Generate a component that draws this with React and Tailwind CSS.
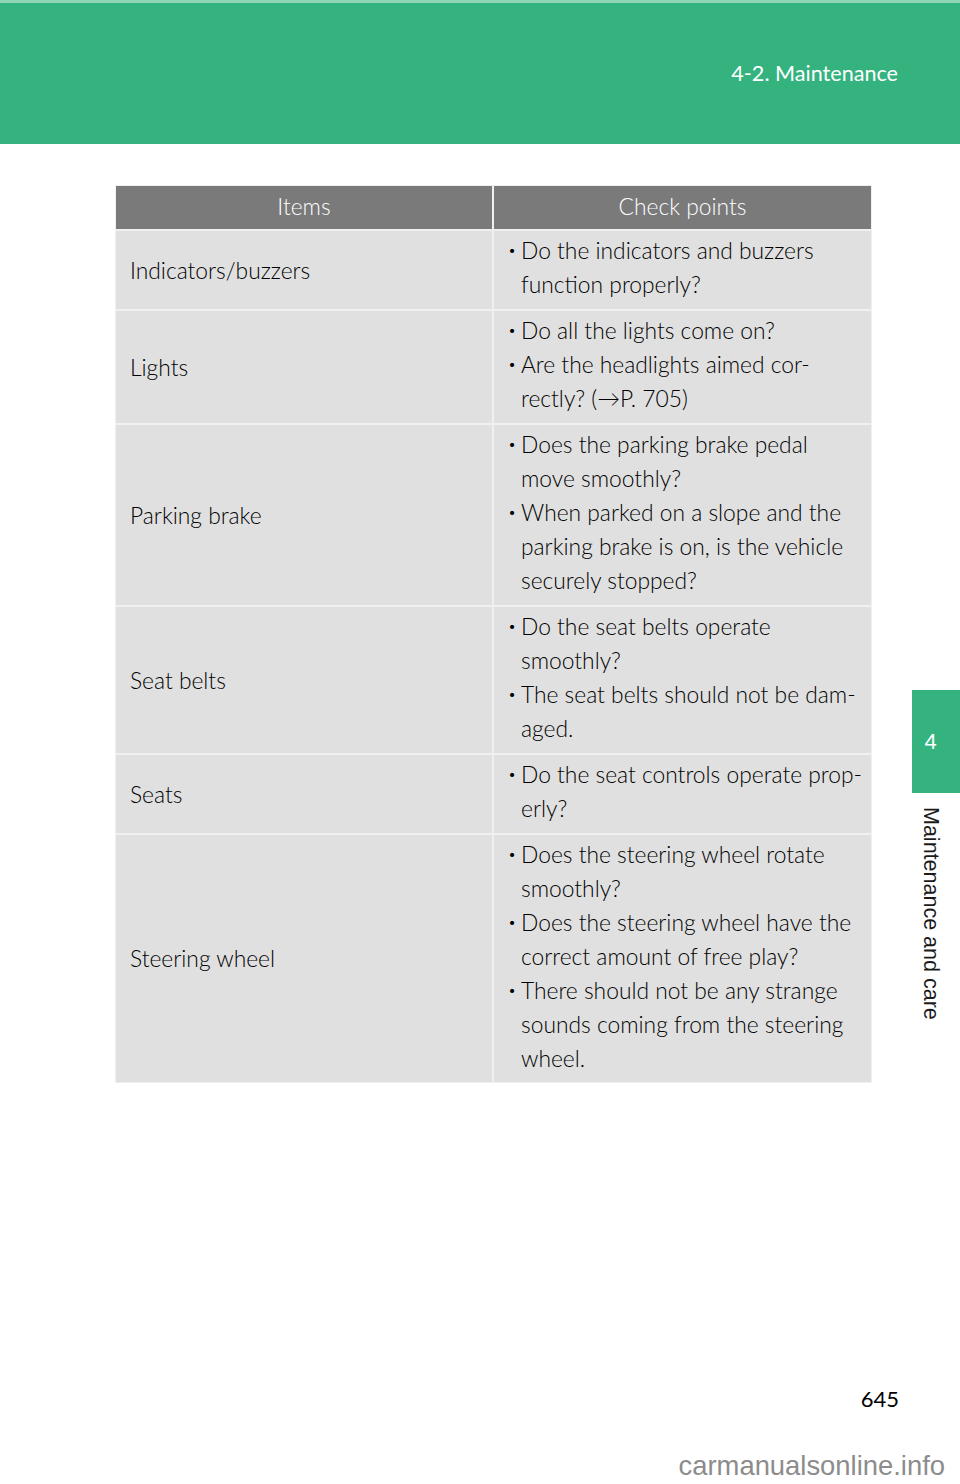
import React from "react";

const rows = [
  { item: "Indicators/buzzers", h: "h-[78px]", points: [["Do the indicators and buzzers", "function properly?"]] },
  { item: "Lights", h: "h-[112px]", points: [["Do all the lights come on?"], ["Are the headlights aimed cor-", "rectly? (\u2192P. 705)"]] },
  {
    item: "Parking brake",
    h: "h-[180px]",
    points: [
      ["Does the parking brake pedal", "move smoothly?"],
      ["When parked on a slope and the", "parking brake is on, is the vehicle", "securely stopped?"],
    ],
  },
  {
    item: "Seat belts",
    h: "h-[146px]",
    points: [["Do the seat belts operate", "smoothly?"], ["The seat belts should not be dam-", "aged."]],
  },
  { item: "Seats", h: "h-[78px]", points: [["Do the seat controls operate prop-", "erly?"]] },
  {
    item: "Steering wheel",
    h: "h-[247px]",
    points: [
      ["Does the steering wheel rotate", "smoothly?"],
      ["Does the steering wheel have the", "correct amount of free play?"],
      ["There should not be any strange", "sounds coming from the steering", "wheel."],
    ],
  },
];

function Bullet({ lines }) {
  return (
    <div className="flex">
      <span className="w-[14px] shrink-0 pl-[1px] text-[14px] leading-[34px]">•</span>
      <div>
        {lines.map((l, i) => (
          <div key={i} className="leading-[34px] whitespace-nowrap">{l}</div>
        ))}
      </div>
    </div>
  );
}

export default function App() {
  return (
    <div className="w-[960px] h-[1484px] bg-white flex flex-col font-['Lato',sans-serif] text-black">
      <div className="h-[144px] shrink-0 bg-[#34b37f] border-t-[3px] border-[#8fd6b6] flex justify-end pr-[62px] pt-[56px]">
        <span className="text-white text-[21.6px] leading-[28px]">4-2. Maintenance</span>
      </div>

      <div className="flex-1 flex">
        <div className="w-[912px] flex flex-col">
          <div className="ml-[115px] mt-[41px] w-[757px] bg-[#f0f0f0] p-[1px] grid grid-cols-[376px_377px] gap-[2px] text-[22.8px] font-light">
            <div className="h-[43px] bg-[#7a7a7a] text-white flex items-center justify-center leading-none pb-[3px]">Items</div>
            <div className="h-[43px] bg-[#7a7a7a] text-white flex items-center justify-center leading-none pb-[3px]">Check points</div>
            {rows.map((r) => (
              <React.Fragment key={r.item}>
                <div className={`${r.h} bg-[#e0e0e0] flex items-center pl-[14px]`}>{r.item}</div>
                <div className={`${r.h} bg-[#e0e0e0] pl-[13px] pt-[2px]`}>
                  {r.points.map((p, i) => (
                    <Bullet key={i} lines={p} />
                  ))}
                </div>
              </React.Fragment>
            ))}
          </div>

          <div className="flex-1" />
          <div className="flex justify-end pr-[13px] text-[22px] leading-none">645</div>
        </div>

        <div className="w-[48px] flex flex-col pt-[546px]">
          <div className="h-[103px] bg-[#34b37f] flex items-center justify-center pr-[11px] font-['Liberation_Sans',sans-serif] text-white text-[22px]">
            4
          </div>
          <div className="flex justify-center pr-[12px] pt-[14px]">
            <span className="[writing-mode:vertical-rl] font-['Liberation_Sans',sans-serif] text-[21.5px] leading-none text-[#1a1a1a]">
              Maintenance and care
            </span>
          </div>
        </div>
      </div>

      <div className="flex justify-end pr-[15px] pt-[42px] pb-[5px] font-['Liberation_Sans',sans-serif] text-[27.4px] leading-none text-[#8c8c8c]">
        carmanualsonline.info
      </div>
    </div>
  );
}
